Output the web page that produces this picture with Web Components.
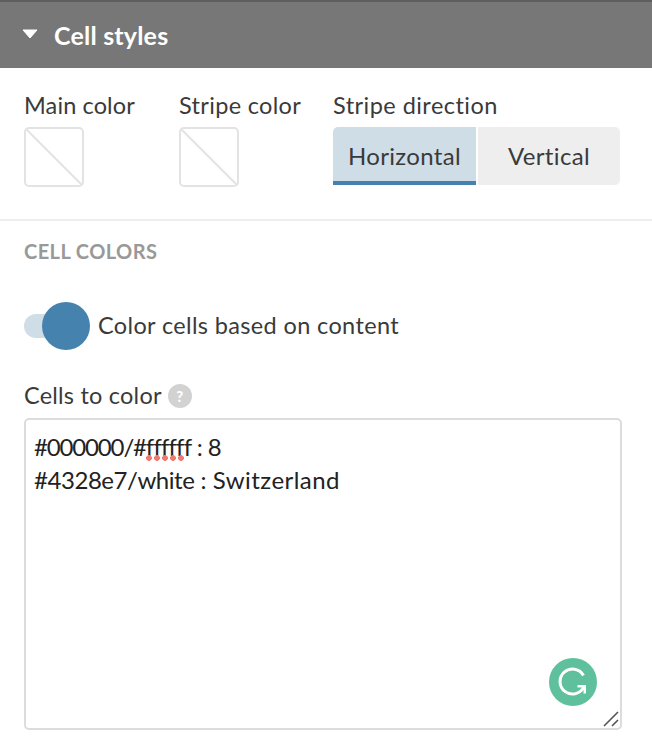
<!DOCTYPE html>
<html lang="en"><head><meta charset="utf-8"><title>Cell styles</title>
<style>
html,body{margin:0;padding:0;background:#fff}
body{font-family:Lato,"Noto Sans",sans-serif;color:#3a3a3a;width:652px;height:748px;overflow:hidden}
</style></head><body>
<panel-section heading="Cell styles">
  <div style="display:flex;padding-left:24px">
    <field-block label="Main color" style="width:155px;--ls:.12px"><color-swatch></color-swatch></field-block>
    <field-block label="Stripe color" style="width:154px;--ls:.33px"><color-swatch></color-swatch></field-block>
    <field-block label="Stripe direction" style="--ls:.46px">
      <seg-control><seg-button active>Horizontal</seg-button><seg-button>Vertical</seg-button></seg-control>
    </field-block>
  </div>
  <section-divider></section-divider>
  <sub-heading>CELL COLORS</sub-heading>
  <toggle-row>Color cells based on content</toggle-row>
  <code-box label="Cells to color"></code-box>
</panel-section>
<script>
function def(name,html,init){customElements.define(name,class extends HTMLElement{
  constructor(){super();this.attachShadow({mode:'open'}).innerHTML=html;}
  connectedCallback(){init&&init.call(this,this.shadowRoot);}
});}
def('panel-section',`<style>
:host{display:block}
header{height:66px;border-top:2px solid #5e5e5e;background:#777;display:flex;align-items:center;padding-left:22px;color:#fff;font:700 25px/1 Lato,sans-serif;letter-spacing:.2px}
svg{margin-right:16px;margin-top:-2px}
main{display:block;padding-top:24px}
</style><header><svg width="16" height="10" viewBox="0 0 16 10"><path d="M1 1H15L8 9Z" fill="#fff" stroke="#fff" stroke-width="1" stroke-linejoin="round"/></svg><span id="t"></span></header><main><slot></slot></main>`,
function(r){r.getElementById('t').textContent=this.getAttribute('heading');});
def('field-block',`<style>
:host{display:block}
label{display:block;font:400 23.5px/26px Lato,sans-serif;letter-spacing:var(--ls,0);color:#3a3a3a;margin-bottom:9px;white-space:nowrap}
</style><label id="l"></label><slot></slot>`,
function(r){r.getElementById('l').textContent=this.getAttribute('label');});
def('color-swatch',`<style>
:host{display:block;width:60px;height:60px}
svg{display:block}
</style><svg width="60" height="60" viewBox="0 0 60 60"><rect x="1" y="1" width="58" height="58" rx="4" fill="#fff" stroke="#e3e3e3" stroke-width="2"/><path d="M2 2L58 58" stroke="#e3e3e3" stroke-width="2"/></svg>`);
def('seg-control',`<style>
:host{display:flex;gap:2px;width:287px;height:58px}
::slotted(seg-button:first-child){flex:0 0 143px;border-radius:5px 0 0 0}
::slotted(seg-button:last-child){flex:0 0 142px;border-radius:0 5px 5px 0}
</style><slot></slot>`);
def('seg-button',`<style>
:host{display:flex;align-items:center;justify-content:center;box-sizing:border-box;background:#eee;color:#3a3a3a;font:400 24px/1 Lato,sans-serif;letter-spacing:.35px}
:host([active]){background:#cfdde6;border-bottom:4px solid #4682ae;padding-top:4px}
</style><slot></slot>`);
def('section-divider',`<style>:host{display:block;height:2px;background:#eee;margin-top:32px}</style>`);
def('sub-heading',`<style>:host{display:block;padding:18px 0 0 24px;font:700 20px/24px Lato,sans-serif;letter-spacing:.42px;color:#999}</style><slot></slot>`);
def('toggle-row',`<style>
:host{display:flex;align-items:center;margin:39px 0 0 24px;height:48px;font:400 23.5px/1 Lato,sans-serif;letter-spacing:.36px;color:#3a3a3a}
.sw{position:relative;width:66px;height:48px;margin-right:8px;flex:none}
.tr{display:block;position:absolute;left:0;top:12px;width:36px;height:24px;border-radius:12px 0 0 12px;background:#cfdde6}
.kn{display:block;position:absolute;left:18px;top:0;width:48px;height:48px;border-radius:50%;background:#4682ae}
</style><span class="sw"><span class="tr"></span><span class="kn"></span></span><slot></slot>`);
def('code-box',`<style>
:host{display:block;padding:0 30px 0 24px}
.lab{display:flex;align-items:center;height:32px;margin-top:30px;font:400 23.5px/1 Lato,sans-serif;letter-spacing:.22px;color:#3a3a3a}
.q{display:flex;align-items:center;justify-content:center;width:24px;height:24px;margin-left:6px;border-radius:50%;background:#d2d2d2;color:#fff;font:900 15px/1 Lato,sans-serif;letter-spacing:0}
.box{position:relative;box-sizing:border-box;width:598px;height:312px;margin-top:6px;border:2px solid #dcdcdc;border-radius:5px;padding:10px 8px;font:400 24px/33px Lato,sans-serif;color:#222;background:#fff}
.a{letter-spacing:-1.15px}
.b{letter-spacing:-.45px}
.c{letter-spacing:.45px}
.d{letter-spacing:-.6px}
.sq{position:relative;display:inline-block;letter-spacing:-.85px}
.sq i{position:absolute;left:0;bottom:2px;display:block;width:40px;height:6px;background:radial-gradient(circle at 3px 3px,#f07a6e 2.6px,transparent 3.1px) 0 0/8px 6px repeat-x}
.g{position:absolute;right:23px;bottom:22px;display:block}
.rs{position:absolute;right:1px;bottom:1px;display:block}
</style>
<div class="lab">Cells to color<span class="q">?</span></div>
<div class="box"><div><span class="a">#000000/#</span><span class="sq">ffffff<i></i></span><span class="d"> : 8</span></div><div><span class="b">#4328e7/white</span> : <span class="c">Switzerland</span></div>
<svg class="g" width="48" height="48" viewBox="0 0 48 48"><circle cx="24" cy="24" r="24" fill="#5ec09c"/><path d="M34.5 17.5A12.5 12.5 0 1 0 35 28.5" fill="none" stroke="#fff" stroke-width="3"/><path d="M28.5 27H37V35.5H34.5V29.5H28.5Z" fill="#fff"/></svg>
<svg class="rs" width="16" height="16" viewBox="0 0 16 16"><path d="M1 15L15 1M9 15L15 9" stroke="#555" stroke-width="1.6"/></svg>
</div>`);
</script></body></html>
